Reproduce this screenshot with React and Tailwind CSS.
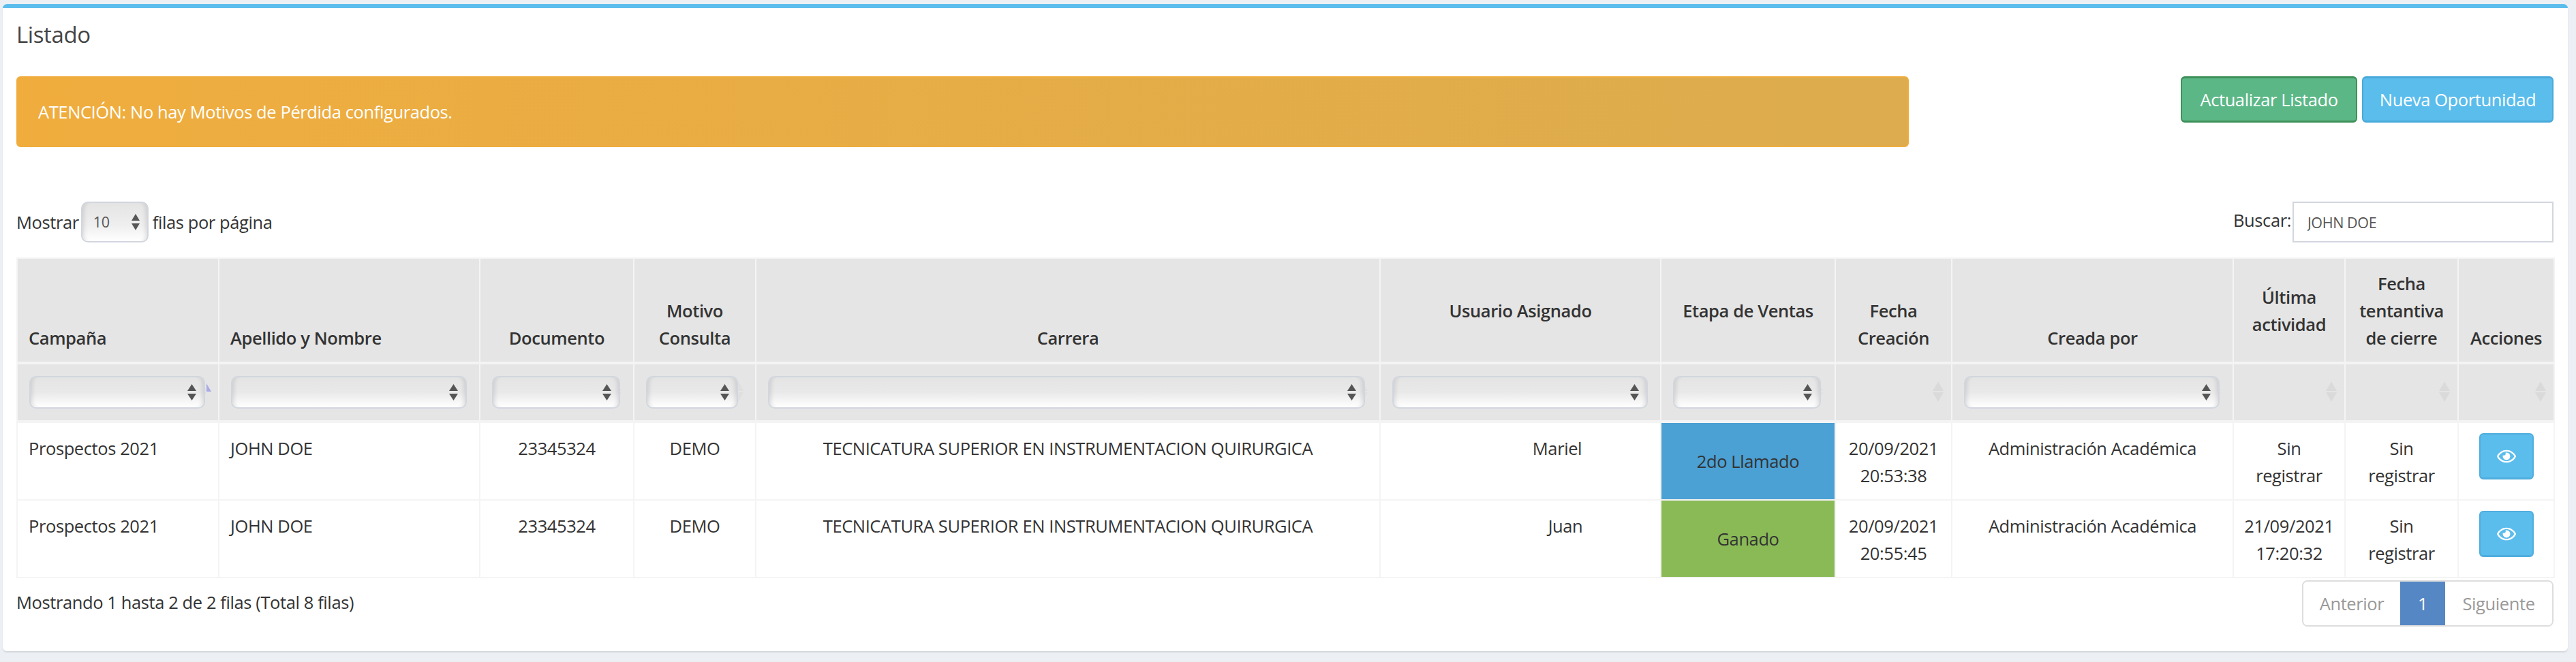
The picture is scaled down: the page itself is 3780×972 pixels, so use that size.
import React from "react";
import { FaRegEye } from "react-icons/fa";

const widths = [296, 383, 226, 179, 916, 412, 256, 171, 413, 164, 166, 141];

const headers = [
  { lines: ["Campaña"], left: true, sel: 258 },
  { lines: ["Apellido y Nombre"], left: true, sel: 346 },
  { lines: ["Documento"], sel: 188 },
  { lines: ["Motivo", "Consulta"], sel: 135 },
  { lines: ["Carrera"], sel: 876 },
  { lines: ["Usuario Asignado", "\u00a0"], sel: 375 },
  { lines: ["Etapa de Ventas", "\u00a0"], sel: 217 },
  { lines: ["Fecha", "Creación"] },
  { lines: ["Creada por"], sel: 375 },
  { lines: ["Última", "actividad"], up: true },
  { lines: ["Fecha", "tentantiva", "de cierre"] },
  { lines: ["Acciones"] },
];

const rows = [
  { user: "Mariel", userPad: "pl-[125px]", etapa: "2do Llamado", color: "bg-[#4ba0d4]", fecha: ["20/09/2021", "20:53:38"], ultima: ["Sin", "registrar"] },
  { user: "Juan", userPad: "pl-[149px]", etapa: "Ganado", color: "bg-[#8aba56]", fecha: ["20/09/2021", "20:55:45"], ultima: ["21/09/2021", "17:20:32"] },
];

function Arrows({ w = 13, color = "#555" }) {
  return (
    <svg width={w} height="24" viewBox="0 0 13 24" className="block shrink-0" preserveAspectRatio="none">
      <path d="M6.5 0L13 10H0Z" fill={color} />
      <path d="M0 14H13L6.5 24Z" fill={color} />
    </svg>
  );
}

function GhostArrows({ hidden }) {
  return (
    <svg
      width="16"
      height="30"
      viewBox="0 0 16 30"
      className={`absolute top-[25px] ${hidden ? "right-[17px] opacity-50" : "right-[11px]"}`}
    >
      <path d="M8 0L16 14H0Z" fill="#dadada" />
      <path d="M0 16H16L8 30Z" fill="#dadada" />
    </svg>
  );
}

function Select({ width }) {
  return (
    <div
      style={{ width }}
      className="relative flex h-[48px] items-center justify-between rounded-[10px] border-2 border-[#d2d6de] bg-[linear-gradient(to_bottom,#e4e4e4_0%,#e9e9e9_50%,#ffffff_100%)] pr-[11px] shadow-[inset_7px_0_6px_-5px_rgba(0,0,0,0.12),inset_-7px_0_6px_-5px_rgba(0,0,0,0.12)]"
    >
      <span />
      <Arrows />
    </div>
  );
}

const body = "border-2 border-[#f4f4f4] align-top px-[17px] pt-[17px] pb-[15px] text-center";

export default function App() {
  return (
    <div
      className="h-[972px] w-[3780px] overflow-hidden bg-[#ecf0f5] pl-[4px] pr-[12px] pt-[6px] text-[25.5px] leading-[40px] tracking-[-0.4px] text-[#333333]"
      style={{ fontFamily: '"Open Sans", "Noto Sans", sans-serif' }}
    >
      <div className="h-[950px] rounded-[6px] border-t-[6px] border-[#5bbdec] bg-white pl-[20px] pr-[21px] shadow-[0_2px_2px_rgba(0,0,0,0.1)]">
        <h3 className="pt-[19px] text-[33px] font-normal leading-[40px] text-[#444444]">Listado</h3>

        <div className="mt-[41px] flex items-start justify-between">
          <div className="flex h-[104px] w-[2777px] items-center rounded-[6px] border-2 border-[#f0ad3e] bg-[linear-gradient(to_right,#f0ad3e,#dcac4e)] px-[30px] text-white">
            ATENCIÓN: No hay Motivos de Pérdida configurados.
          </div>
          <div className="flex gap-[7px]">
            <button className="h-[68px] w-[259px] rounded-[6px] border-2 border-b-[3px] border-t-[3px] border-[#3f8f5a] bg-[#5cb786] text-white">
              Actualizar Listado
            </button>
            <button className="h-[68px] w-[281px] rounded-[6px] border-2 border-b-[3px] border-t-[3px] border-[#4aaad9] bg-[#5bbdec] text-white">
              Nueva Oportunidad
            </button>
          </div>
        </div>

        <div className="mt-[80px] flex h-[60px] items-center justify-between">
          <div className="flex items-center">
            <span>Mostrar</span>
            <div className="ml-[3px] mr-[6px] flex h-[60px] w-[99px] items-center justify-between rounded-[10px] border-2 border-[#d2d6de] bg-[linear-gradient(to_bottom,#e4e4e4_0%,#efefef_60%,#ffffff_100%)] pl-[16px] pr-[11px] text-[21.5px] text-[#555555] shadow-[inset_7px_0_6px_-5px_rgba(0,0,0,0.12),inset_-7px_0_6px_-5px_rgba(0,0,0,0.12)]">
              <span>10</span>
              <Arrows w={12} />
            </div>
            <span>filas por página</span>
          </div>
          <div className="flex items-center">
            <span className="mb-[6px]">Buscar:</span>
            <input
              readOnly
              value="JOHN DOE"
              className="ml-[2px] h-[60px] w-[383px] border-2 border-[#d2d6de] bg-white px-[20px] text-[21.5px] text-[#555555] outline-none"
            />
          </div>
        </div>

        <table className="mt-[22px] w-[3723px] table-fixed border-collapse">
          <colgroup>
            {widths.map((w, i) => (
              <col key={i} style={{ width: w }} />
            ))}
          </colgroup>
          <thead>
            <tr className="h-[154px] bg-[#e5e5e5]">
              {headers.map((h, i) => (
                <th
                  key={i}
                  className={`border-2 border-b-4 border-[#f4f4f4] align-bottom font-semibold ${h.up ? "pb-[35px]" : "pb-[15px]"} ${h.left ? "pl-[16px] pr-[17px] text-left" : "px-[17px] text-center"}`}
                >
                  {h.lines.map((l, j) => (
                    <div key={j}>{l}</div>
                  ))}
                </th>
              ))}
            </tr>
            <tr className="h-[86px] bg-[#e5e5e5]">
              {headers.map((h, i) => (
                <th key={i} className="relative border-2 border-b-4 border-t-4 border-[#f4f4f4] px-[17px] font-semibold">
                  <GhostArrows hidden={!!h.sel} />
                  {i === 0 && (
                    <svg width="7" height="12" viewBox="0 0 7 12" className="absolute left-[277px] top-[28px]">
                      <path d="M0 0L7 12H0Z" fill="#a9a9e6" />
                    </svg>
                  )}
                  {h.sel && <Select width={h.sel} />}
                </th>
              ))}
            </tr>
          </thead>
          <tbody>
            {rows.map((r, i) => (
              <tr key={i} className="h-[113px]">
                <td className={`${body} !pl-[16px] !text-left`}>Prospectos 2021</td>
                <td className={`${body} !pl-[16px] !text-left`}>JOHN DOE</td>
                <td className={body}>23345324</td>
                <td className={body}>DEMO</td>
                <td className={body}>TECNICATURA SUPERIOR EN INSTRUMENTACION QUIRURGICA</td>
                <td className={`${body} ${r.userPad}`}>{r.user}</td>
                <td className={`border-2 border-[#f4f4f4] px-[17px] text-center align-middle ${r.color}`}>{r.etapa}</td>
                <td className={`${body} !px-0`}>
                  {r.fecha.map((l) => (
                    <div key={l}>{l}</div>
                  ))}
                </td>
                <td className={body}>Administración Académica</td>
                <td className={`${body} !px-0`}>
                  {r.ultima.map((l) => (
                    <div key={l}>{l}</div>
                  ))}
                </td>
                <td className={`${body} !px-0`}>
                  <div>Sin</div>
                  <div>registrar</div>
                </td>
                <td className="border-2 border-[#f4f4f4] pl-[30px] pt-[15px] align-top">
                  <button className="flex h-[68px] w-[80px] items-center justify-center rounded-[6px] border-2 border-b-[3px] border-[#4fadde] bg-[#5bbdec] text-white">
                    <FaRegEye className="h-[28px] w-[28px]" />
                  </button>
                </td>
              </tr>
            ))}
          </tbody>
        </table>

        <div className="mt-[3px] flex items-start justify-between">
          <div className="pt-[12px]">Mostrando 1 hasta 2 de 2 filas (Total 8 filas)</div>
          <div className="flex h-[68px] overflow-hidden rounded-[8px] border-2 border-[#dddddd]">
            <div className="flex w-[142px] items-center justify-center bg-white text-[#999999]">Anterior</div>
            <div className="flex w-[66px] items-center justify-center bg-[#5587c4] text-white">1</div>
            <div className="flex w-[157px] items-center justify-center bg-white text-[#999999]">Siguiente</div>
          </div>
        </div>
      </div>
    </div>
  );
}
